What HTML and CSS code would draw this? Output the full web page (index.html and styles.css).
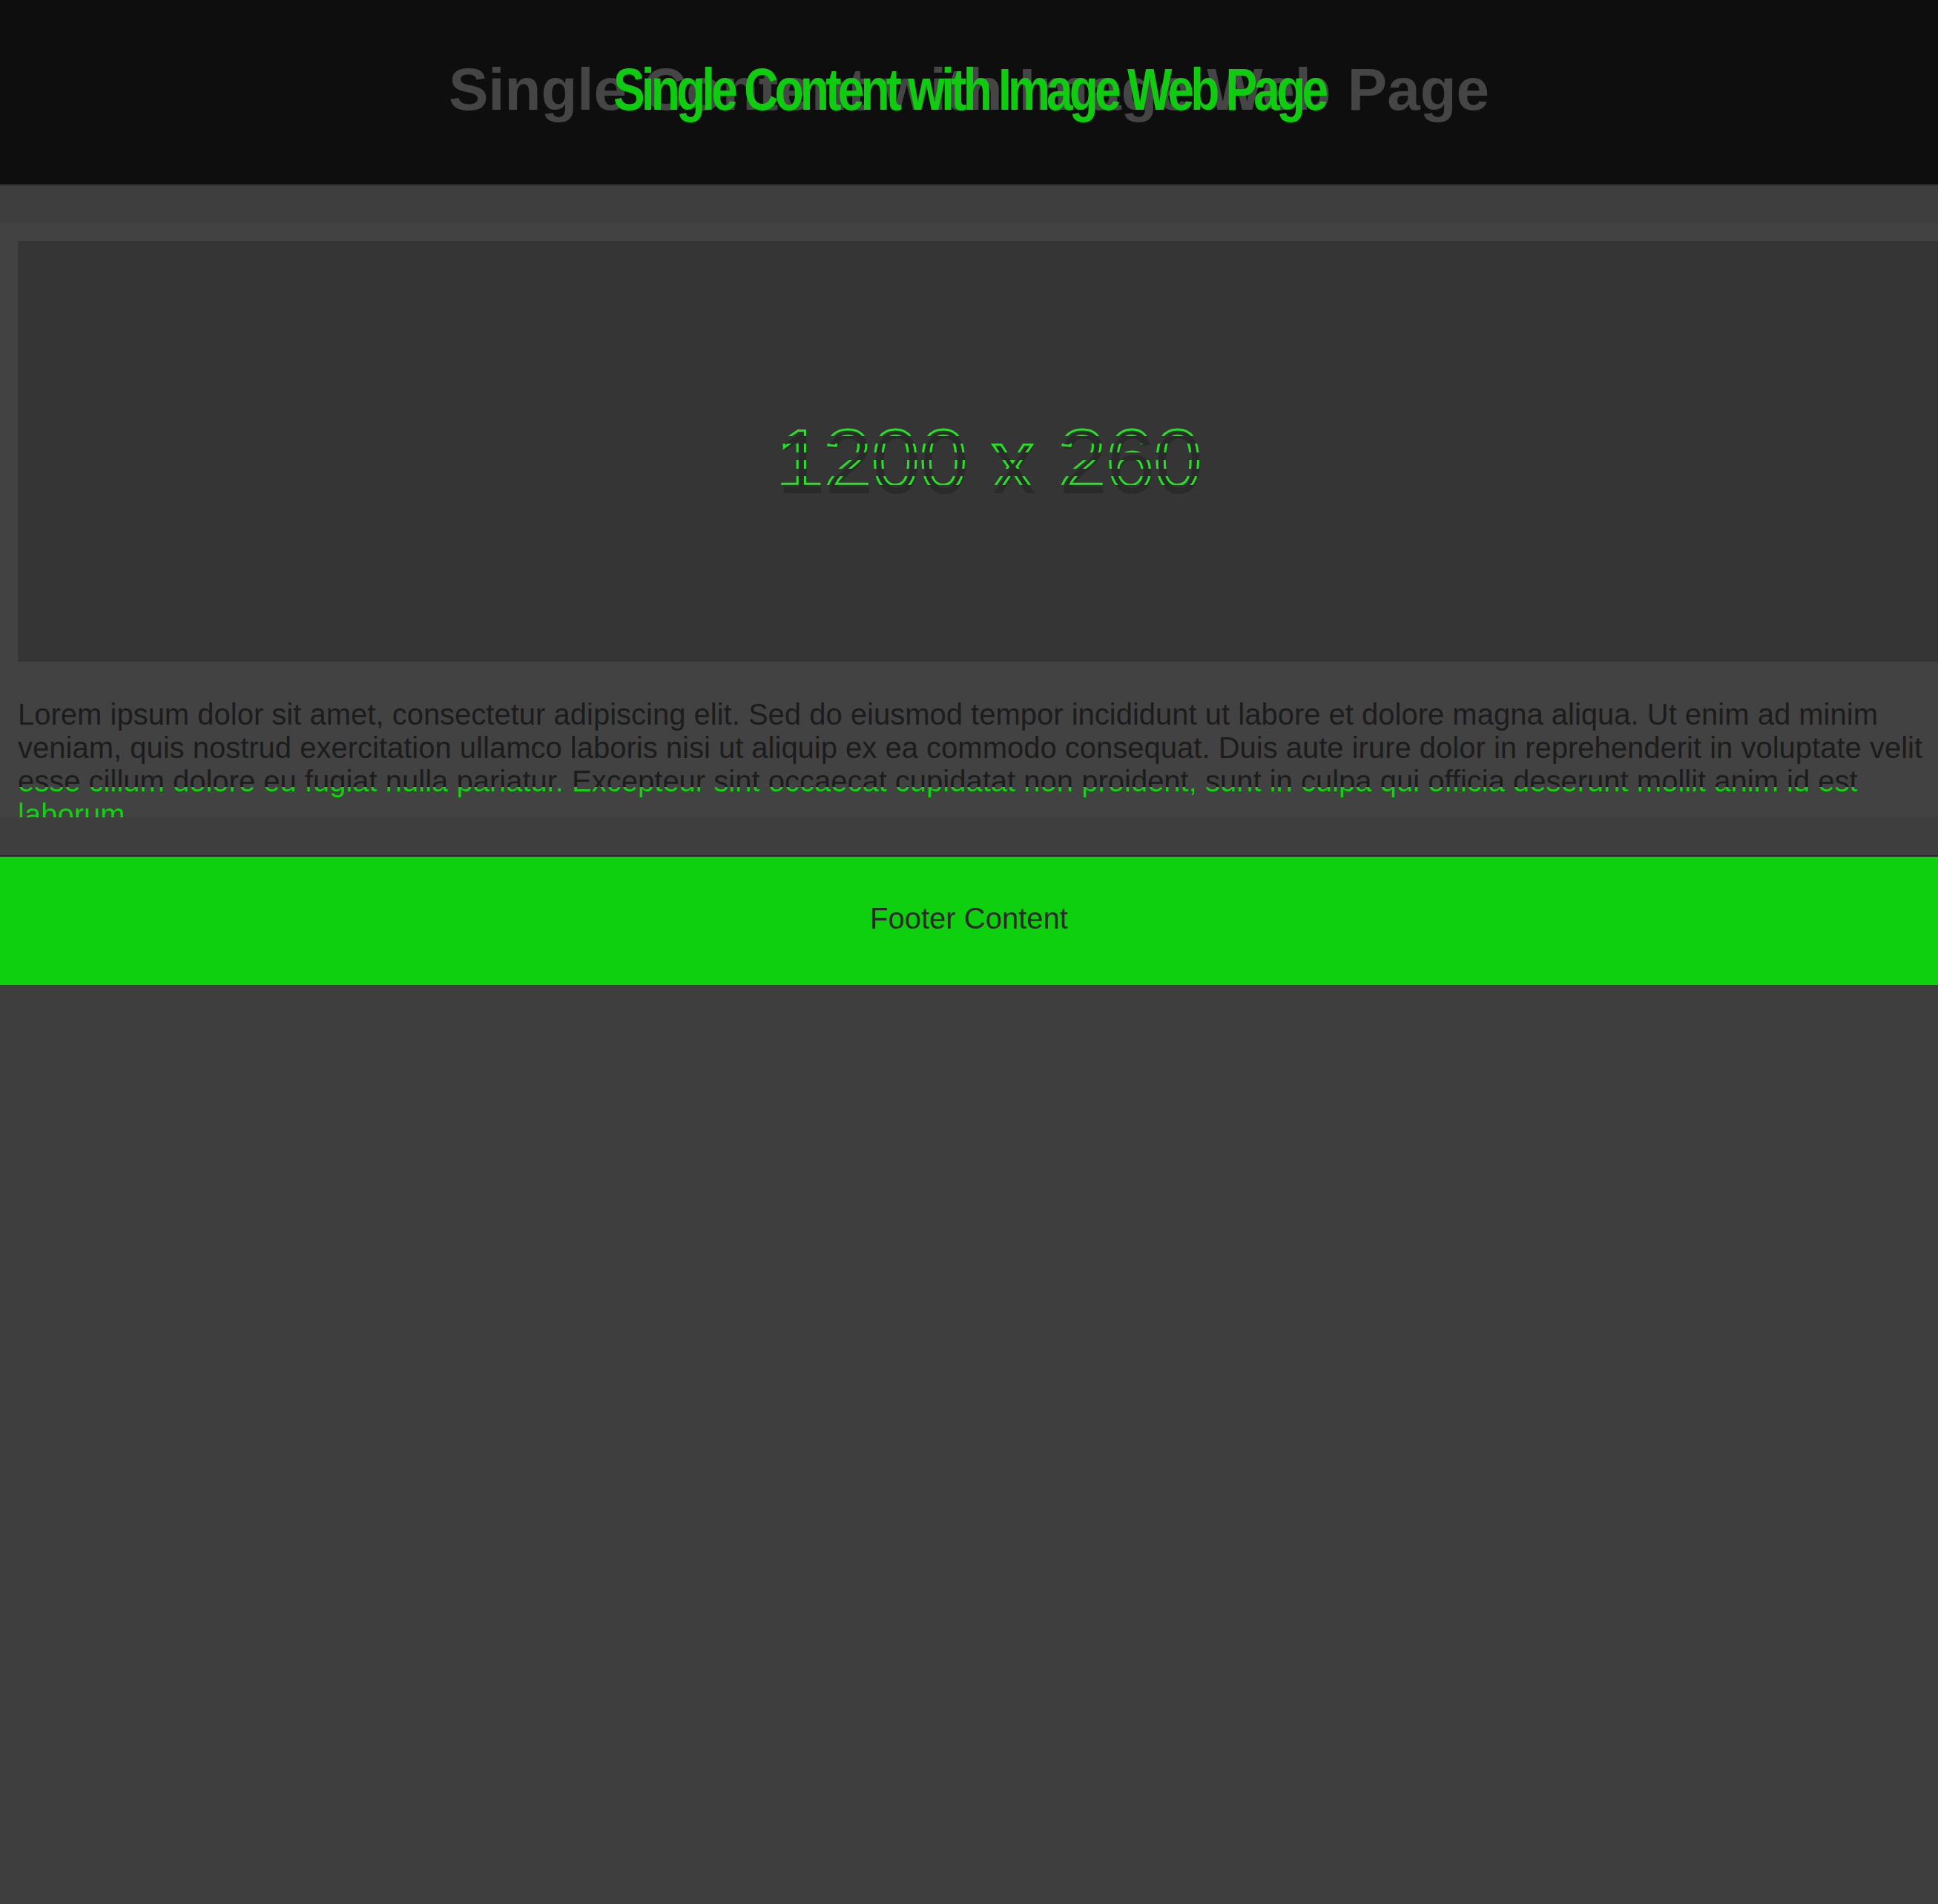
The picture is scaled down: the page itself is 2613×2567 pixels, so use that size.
FILE: index.html
```html
<!DOCTYPE html>
<html lang="en">
<head>
<meta charset="utf-8">
<title>Single Content with Image Web Page</title>
<link rel="stylesheet" href="styles.css">
</head>
<body>
<header class="site-header">
  <div class="title-wrap">
    <h1 class="title">Single Content with Image Web Page</h1>
    <span class="title-ghost" aria-hidden="true">Single Content with Image Web Page</span>
  </div>
</header>
<main class="main">
  <section class="content">
    <div class="hero">
      <span class="hero-label">1200 x 260<span class="hero-ghost" aria-hidden="true">1200 x 260</span></span>
    </div>
    <div class="text-wrap">
      <p class="text">Lorem ipsum dolor sit amet, consectetur adipiscing elit. Sed do eiusmod tempor incididunt ut labore et dolore magna aliqua. Ut enim ad minim veniam, quis nostrud exercitation ullamco laboris nisi ut aliquip ex ea commodo consequat. Duis aute irure dolor in reprehenderit in voluptate velit esse cillum dolore eu fugiat nulla pariatur. Excepteur sint occaecat cupidatat non proident, sunt in culpa qui officia deserunt mollit anim id est laborum.</p>
      <p class="text text-ghost" aria-hidden="true">Lorem ipsum dolor sit amet, consectetur adipiscing elit. Sed do eiusmod tempor incididunt ut labore et dolore magna aliqua. Ut enim ad minim veniam, quis nostrud exercitation ullamco laboris nisi ut aliquip ex ea commodo consequat. Duis aute irure dolor in reprehenderit in voluptate velit esse cillum dolore eu fugiat nulla pariatur. Excepteur sint occaecat cupidatat non proident, sunt in culpa qui officia deserunt mollit anim id est laborum.</p>
    </div>
  </section>
</main>
<footer class="site-footer">
  <p class="footer-text">Footer Content</p>
</footer>
</body>
</html>
```
FILE: styles.css
```css
html, body {
  margin: 0;
  padding: 0;
  background: #3e3e3e;
  overflow-x: hidden;
  font-family: "Liberation Sans", Arial, sans-serif;
}

.site-header {
  height: 250px;
  box-sizing: border-box;
  background: #0e0e0e;
  border-bottom: 2px solid #262626;
  display: flex;
  align-items: center;
  justify-content: center;
  padding-bottom: 6px;
}

.title-wrap {
  position: relative;
}

.title {
  margin: 0;
  font-size: 80px;
  font-weight: 700;
  color: #454545;
  white-space: nowrap;
}

.title-ghost {
  position: absolute;
  left: -200px;
  right: -200px;
  top: 0;
  text-align: center;
  font-size: 80px;
  font-weight: 700;
  color: #10cc10;
  white-space: nowrap;
  letter-spacing: -6px;
  transform: scaleX(0.8);
  transform-origin: center;
}

.main {
  padding-top: 50px;
}

.content {
  height: 802px;
  box-sizing: border-box;
  background: #424242;
  overflow: hidden;
  padding: 25px 0 0 24px;
}

.hero {
  width: 2622px;
  height: 567px;
  box-sizing: border-box;
  padding-top: 32px;
  background: #353535;
  display: flex;
  align-items: center;
  justify-content: center;
}

.hero-label {
  position: relative;
  font-size: 116px;
  color: #2a2a2a;
  white-space: nowrap;
}

.hero-ghost {
  position: absolute;
  left: -2px;
  top: -4px;
  color: transparent;
  -webkit-text-stroke: 3px #28e028;
  -webkit-mask-image: repeating-linear-gradient(180deg, #000 0 12px, transparent 12px 22px);
  mask-image: repeating-linear-gradient(180deg, #000 0 12px, transparent 12px 22px);
}

.text-wrap {
  position: relative;
  width: 2622px;
  margin-top: 49px;
}

.text {
  margin: 0;
  font-size: 40px;
  color: #1c1c1c;
}

.text-ghost {
  position: absolute;
  left: 0;
  top: 0;
  width: 100%;
  color: #16d016;
  clip-path: inset(120px 0 0 0);
}

.site-footer {
  margin-top: 51px;
  height: 175px;
  box-sizing: border-box;
  background: #0ed00e;
  border-top: 2px solid #262626;
  display: flex;
  align-items: center;
  justify-content: center;
  padding-bottom: 6px;
}

.footer-text {
  margin: 0;
  font-size: 40px;
  color: #2a2a2a;
}
```
